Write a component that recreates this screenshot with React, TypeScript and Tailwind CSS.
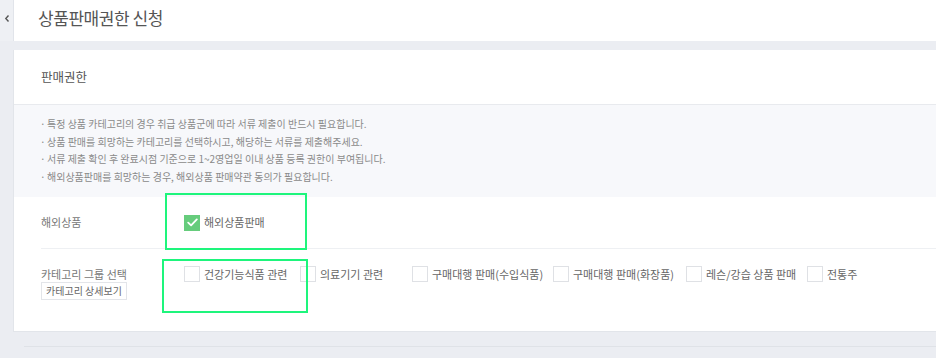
import React from "react";

const font = { fontFamily: '"Noto Sans CJK KR", "Noto Sans", sans-serif' };

function Box({ checked }: { checked?: boolean }) {
  if (checked) {
    return (
      <span className="flex h-[16px] w-[16px] shrink-0 items-center justify-center bg-[#66cc7c]">
        <svg width="11" height="9" viewBox="0 0 11 9" fill="none">
          <path d="M1.2 4.6 L4.1 7.3 L9.8 1.4" stroke="#ffffff" strokeWidth="1.8" strokeLinecap="round" strokeLinejoin="round" />
        </svg>
      </span>
    );
  }
  return <span className="h-[16px] w-[16px] shrink-0 border border-[#dfe1e5] bg-white" />;
}

const cats: { label: string; w: string }[] = [
  { label: "건강기능식품 관련", w: "w-[116px]" },
  { label: "의료기기 관련", w: "w-[112px]" },
  { label: "구매대행 판매(수입식품)", w: "w-[141px]" },
  { label: "구매대행 판매(화장품)", w: "w-[133px]" },
  { label: "레슨/강습 상품 판매", w: "w-[121px]" },
  { label: "전통주", w: "w-[80px]" },
];

const notes = [
  "특정 상품 카테고리의 경우 취급 상품군에 따라 서류 제출이 반드시 필요합니다.",
  "상품 판매를 희망하는 카테고리를 선택하시고, 해당하는 서류를 제출해주세요.",
  "서류 제출 확인 후 완료시점 기준으로 1~2영업일 이내 상품 등록 권한이 부여됩니다.",
  "해외상품판매를 희망하는 경우, 해외상품 판매약관 동의가 필요합니다.",
];

export default function App() {
  return (
    <div className="relative h-[358px] w-[936px] overflow-hidden bg-[#ebedf2]" style={font}>
      {/* header */}
      <div className="flex h-[41px] bg-white">
        <div className="flex h-[41px] w-[14px] shrink-0 items-start justify-center border-r border-[#e1e4ea] bg-[#eef0f4] pt-[12px]">
          <svg width="6" height="9" viewBox="0 0 6 9" fill="none" className="mt-[2px]">
            <path d="M4.5 1.5 L1.8 4.5 L4.5 7.5" stroke="#555" strokeWidth="1.4" />
          </svg>
        </div>
        <div className="pl-[24px] pt-[8px] text-[17px] leading-[20px] tracking-[-0.45px] text-[#555]">
          상품판매권한 신청
        </div>
      </div>

      {/* card */}
      <div className="ml-[13px] mt-[9px] border-b border-l border-[#e2e5ea] bg-white">
        <div className="flex h-[55px] items-center border-b border-[#e8eaee] pl-[27px] text-[12.5px] text-[#555]">
          판매권한
        </div>
        <div className="bg-[#f7f8fb] pb-[12px] pl-[26px] pt-[10px] text-[10px] leading-[17.5px] text-[#8a8a8a]">
          {notes.map((n) => (
            <div key={n} className="flex">
              <span className="w-[7px] shrink-0">·</span>
              <span>{n}</span>
            </div>
          ))}
        </div>
        <div className="pl-[27px]">
          <div className="flex h-[52px] items-center border-b border-[#eef0f3]">
            <div className="w-[143px] shrink-0 text-[11px] text-[#777]">해외상품</div>
            <div className="flex items-center">
              <Box checked />
              <span className="ml-[4px] text-[11px] text-[#666]">해외상품판매</span>
            </div>
          </div>
          <div className="flex h-[82px] items-start pt-[17px]">
            <div className="w-[143px] shrink-0">
              <div className="text-[11px] leading-[16px] text-[#777]">카테고리 그룹 선택</div>
              <div className="flex h-[18px] w-[86px] items-center justify-center border border-[#e3e5e9] bg-white text-[10px] leading-[14px] text-[#666]">
                카테고리 상세보기
              </div>
            </div>
            <div className="flex">
              {cats.map((c) => (
                <div key={c.label} className={`flex shrink-0 items-center ${c.w}`}>
                  <Box />
                  <span className="ml-[4px] whitespace-nowrap text-[11px] leading-[16px] text-[#666]">
                    {c.label}
                  </span>
                </div>
              ))}
            </div>
          </div>
        </div>
      </div>

      <div className="ml-[24px] mt-[14px] h-[20px] border-t border-[#dfe2e7]" />

      {/* annotation highlights */}
      <div className="absolute left-[165px] top-[193px] h-[57px] w-[142px] border-2 border-[#1ef57c]" />
      <div className="absolute left-[162px] top-[259px] h-[54px] w-[146px] border-2 border-[#1ef57c]" />
    </div>
  );
}
